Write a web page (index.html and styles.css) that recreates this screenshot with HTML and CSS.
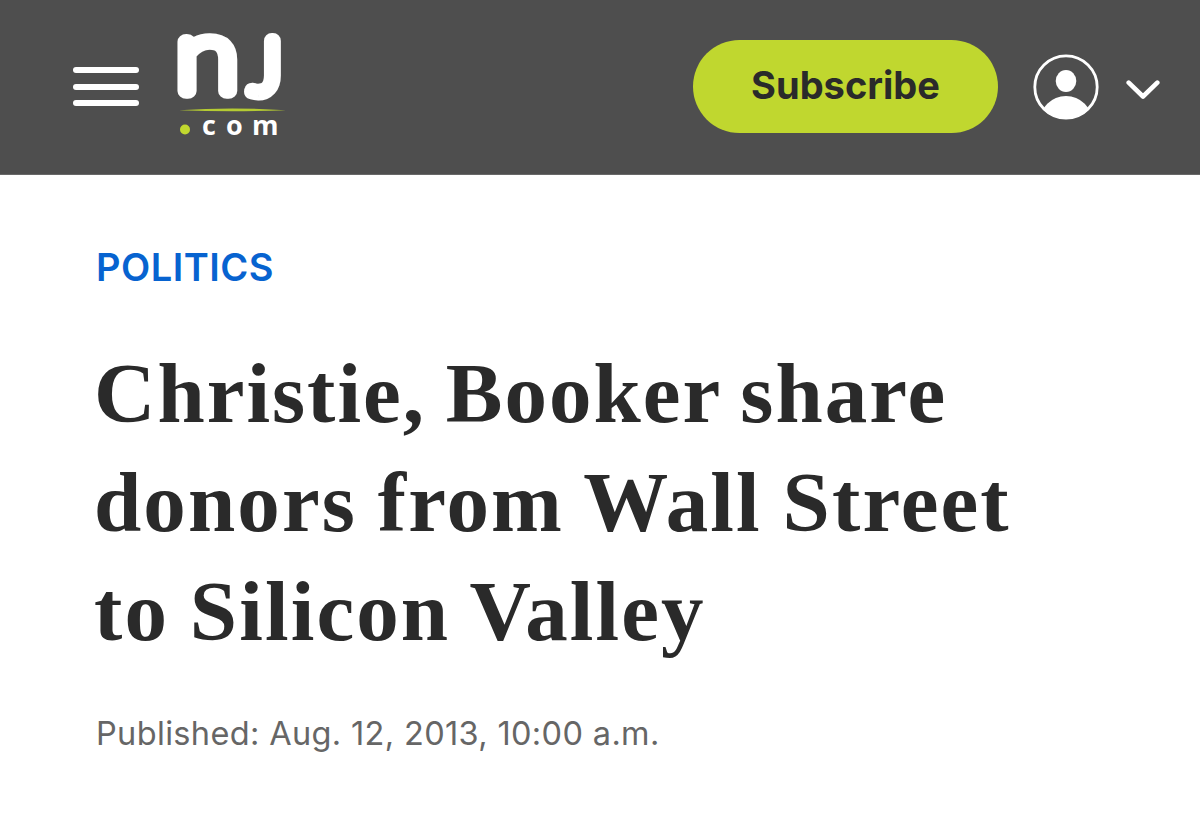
FILE: index.html
```html
<!DOCTYPE html>
<html lang="en">
<head>
    <meta charset="UTF-8">
    <title>Christie, Booker share donors from Wall Street to Silicon Valley - nj.com</title>
    <link rel="stylesheet" href="styles.css">
</head>
<body>
    <header class="site-header">
        <button class="menu-button" aria-label="Menu">
            <span></span>
            <span></span>
            <span></span>
        </button>
        <a class="logo" href="#" aria-label="nj.com">
            <svg width="112" height="110" viewBox="0 0 112 110">
                <g class="logo-name">
                    <text class="logo-n" transform="translate(1.7 63.3) scale(1.14 1)">n</text>
                    <text class="logo-j" x="77" y="64">J</text>
                </g>
                <path d="M5 82.3Q58 78.5 112 82.3Q58 84 5 82.3Z" fill="#b5cb33"/>
                <circle cx="11" cy="101.5" r="5" fill="#c1d82f"/>
                <g class="logo-com">
                    <text x="28" y="106.5">c</text>
                    <text x="52" y="106.5">o</text>
                    <text x="78" y="106.5">m</text>
                </g>
            </svg>
        </a>
        <button class="subscribe">Subscribe</button>
        <button class="account" aria-label="Account">
            <svg width="66" height="66" viewBox="0 0 66 66">
                <clipPath id="avatar"><circle cx="33" cy="33" r="32"/></clipPath>
                <circle cx="33" cy="33" r="31.2" fill="none" stroke="#fff" stroke-width="2.8"/>
                <ellipse cx="33" cy="27" rx="10.3" ry="11"/>
                <circle cx="33" cy="68.5" r="26.5" clip-path="url(#avatar)"/>
            </svg>
            <svg width="34" height="20" viewBox="0 0 34 20">
                <path d="M2.7 2.7L17 16.5L31.3 2.7" fill="none" stroke="#fff" stroke-width="4.6" stroke-linecap="round" stroke-linejoin="round"/>
            </svg>
        </button>
    </header>
    <main class="article">
        <a class="section" href="#">POLITICS</a>
        <h1 class="headline">
            <span class="line">Christie, Booker share</span>
            <span class="line wide">donors from Wall Street</span>
            <span class="line wide">to Silicon Valley</span>
        </h1>
        <p class="published">Published: Aug. 12, 2013, 10:00 a.m.</p>
    </main>
</body>
</html>
```
FILE: styles.css
```css
* {
    box-sizing: border-box;
}
body {
    margin: 0;
    background-color: #fff;
    font-family: Inter, "Liberation Sans", sans-serif;
    font-optical-sizing: none;
    color: #2a2a2a;
}
button {
    border: none;
    background: none;
    padding: 0;
    font-family: inherit;
    cursor: pointer;
}
.site-header {
    display: flex;
    align-items: flex-start;
    height: 175px;
    padding-left: 73px;
    background-color: #4e4e4e;
    border-bottom: 1px solid #686868;
}
.menu-button {
    display: flex;
    flex-direction: column;
    gap: 10.5px;
    width: 66px;
    margin-top: 67px;
}
.menu-button span {
    height: 6px;
    border-radius: 3px;
    background-color: #fff;
}
.logo {
    margin: 28px 0 0 35px;
}
.logo svg {
    display: block;
    overflow: visible;
}
.logo-name {
    font-family: Lato, sans-serif;
    font-weight: 100;
    fill: #fff;
    stroke: #fff;
    stroke-linecap: round;
    stroke-linejoin: round;
}
.logo-n {
    font-size: 101px;
    stroke-width: 15.5px;
}
.logo-j {
    font-size: 73px;
    stroke-width: 16px;
}
.logo-com {
    font-family: "Open Sans", sans-serif;
    font-size: 27px;
    font-weight: 700;
    fill: #fff;
}
.subscribe {
    width: 305px;
    height: 93px;
    margin: 40px 0 0 407px;
    padding-bottom: 4px;
    border-radius: 47px;
    background-color: #c0d72f;
    color: #2a2a2a;
    font-size: 38px;
    font-weight: 700;
}
.account {
    display: flex;
    align-items: center;
    gap: 27px;
    margin: 54px 0 0 35px;
}
.account svg {
    display: block;
    fill: #fff;
}
.account svg + svg {
    margin-top: 5px;
}
.article {
    padding: 68px 96px 0;
}
.section {
    display: block;
    color: #0763d0;
    font-size: 38px;
    font-weight: 600;
    line-height: 48px;
    letter-spacing: 0.5px;
    text-decoration: none;
}
.headline {
    margin: 48px 0 0 -2px;
    font-family: "Liberation Serif", serif;
    font-size: 85px;
    font-weight: 700;
    line-height: 109.2px;
    letter-spacing: 2px;
    word-spacing: -3.5px;
}
.line {
    display: block;
    white-space: nowrap;
}
.wide {
    letter-spacing: 2.1px;
    word-spacing: -2.5px;
}
.published {
    margin: 47px 0 0;
    color: #666;
    font-size: 32.5px;
    line-height: 40px;
    letter-spacing: 0.35px;
}
```
